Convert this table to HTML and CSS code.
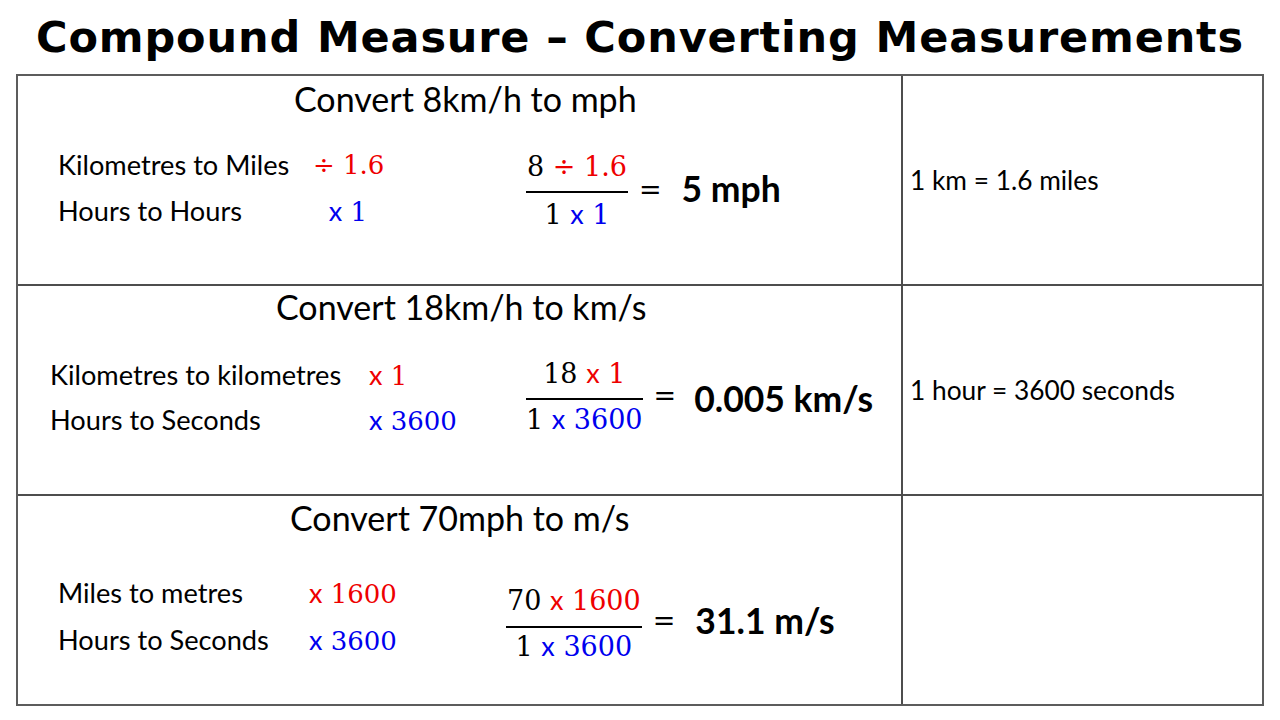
FILE: index.html
```html
<!DOCTYPE html>
<html lang="en">
<head>
<meta charset="utf-8">
<title>Compound Measure – Converting Measurements</title>
<link rel="stylesheet" href="styles.css">
</head>
<body>
<h1 class="title">Compound Measure – Converting Measurements</h1>
<div class="table">
  <div class="cell work-cell row-a">
    <div class="heading">Convert 8km/h to mph</div>
    <div class="work">
      <div class="steps">
        <span class="label">Kilometres to Miles</span><span class="val red">÷ 1.6</span>
        <span class="label">Hours to Hours</span><span class="val blue"><span class="x">x</span> 1</span>
      </div>
      <div class="calc">
        <div class="frac">
          <div class="num">8 <span class="red">÷ 1.6</span></div>
          <div class="den">1 <span class="blue"><span class="x">x</span> 1</span></div>
        </div>
        <span class="eq">=</span>
        <span class="result">5 mph</span>
      </div>
    </div>
  </div>
  <div class="cell note-cell"><span class="note">1 km = 1.6 miles</span></div>

  <div class="cell work-cell row-b">
    <div class="heading">Convert 18km/h to km/s</div>
    <div class="work">
      <div class="steps">
        <span class="label">Kilometres to kilometres</span><span class="val red"><span class="x">x</span> 1</span>
        <span class="label">Hours to Seconds</span><span class="val blue"><span class="x">x</span> 3600</span>
      </div>
      <div class="calc">
        <div class="frac">
          <div class="num">18 <span class="red"><span class="x">x</span> 1</span></div>
          <div class="den">1 <span class="blue"><span class="x">x</span> 3600</span></div>
        </div>
        <span class="eq">=</span>
        <span class="result">0.005 km/s</span>
      </div>
    </div>
  </div>
  <div class="cell note-cell"><span class="note">1 hour = 3600 seconds</span></div>

  <div class="cell work-cell row-c">
    <div class="heading">Convert 70mph to m/s</div>
    <div class="work">
      <div class="steps">
        <span class="label">Miles to metres</span><span class="val red"><span class="x">x</span> 1600</span>
        <span class="label">Hours to Seconds</span><span class="val blue"><span class="x">x</span> 3600</span>
      </div>
      <div class="calc">
        <div class="frac">
          <div class="num">70 <span class="red"><span class="x">x</span> 1600</span></div>
          <div class="den">1 <span class="blue"><span class="x">x</span> 3600</span></div>
        </div>
        <span class="eq">=</span>
        <span class="result">31.1 m/s</span>
      </div>
    </div>
  </div>
  <div class="cell note-cell"></div>
</div>
</body>
</html>
```

FILE: styles.css
```css
* { box-sizing: border-box; margin: 0; padding: 0; }

body {
  width: 1280px;
  height: 720px;
  overflow: hidden;
  background: #fff;
  color: #000;
  font-family: Lato, "Open Sans", sans-serif;
}

.title {
  height: 74px;
  font-family: "DejaVu Sans", sans-serif;
  font-weight: bold;
  font-size: 43px;
  letter-spacing: 0.85px;
  line-height: 74px;
  text-align: center;
  white-space: nowrap;
}

.table {
  margin-left: 16px;
  width: 1248px;
  height: 632px;
  display: grid;
  grid-template-columns: 883px 1fr;
  grid-template-rows: repeat(3, 208px);
  gap: 2px;
  background: #4d4d4d;
  border: 2px solid #5c5c5c;
}

.cell { background: #fff; }

.work-cell {
  display: flex;
  flex-direction: column;
}

.heading {
  font-size: 34px;
  line-height: 40px;
  white-space: nowrap;
  padding-left: var(--hx);
  padding-top: var(--hy);
}

.work {
  display: flex;
  align-items: flex-start;
  margin-top: var(--wy);
  padding-left: var(--sx);
}

.steps {
  display: grid;
  grid-template-columns: var(--labw) var(--valw);
  line-height: var(--step-lh);
}

.label {
  font-size: 27.2px;
  white-space: nowrap;
}

.val {
  font-family: "DejaVu Serif", serif;
  font-size: 26px;
  white-space: nowrap;
  text-align: var(--valalign);
}

.x {
  font-family: Lato, sans-serif;
  font-size: 27px;
}

.red { color: #ee0000; }
.blue { color: #0000ee; }

.calc {
  display: flex;
  align-items: flex-start;
  margin-left: var(--cx);
  margin-top: var(--cy);
}

.frac {
  display: flex;
  flex-direction: column;
  align-items: center;
  font-family: "DejaVu Serif", serif;
  font-size: 27px;
  white-space: nowrap;
}

.num {
  line-height: 40px;
  padding: 0 1px var(--numpb);
}

.den {
  align-self: stretch;
  text-align: center;
  border-top: 2px solid #000;
  line-height: var(--denlh);
}

.eq {
  font-family: "DejaVu Serif", serif;
  font-size: 27px;
  line-height: 40px;
  margin-left: var(--eqx);
  margin-top: var(--eqy);
}

.result {
  font-weight: bold;
  font-size: 35.5px;
  line-height: 40px;
  white-space: nowrap;
  margin-left: var(--rx);
  margin-top: var(--ry);
}

.note-cell {
  display: flex;
  align-items: center;
  padding-left: 7px;
  font-size: 26.3px;
  line-height: 40px;
  white-space: nowrap;
}

.row-a {
  --hx: 276px; --hy: 3px;
  --wy: 23px; --sx: 40px;
  --labw: 255px; --valw: 70px; --valalign: center; --step-lh: 46px;
  --cx: 143px; --cy: 5px;
  --numpb: 4px; --denlh: 42px;
  --eqx: 11px; --eqy: 23px;
  --rx: 20px; --ry: 22px;
}

.row-b {
  --hx: 258px; --hy: 1px;
  --wy: 26px; --sx: 32px;
  --labw: 319px; --valw: 85px; --valalign: left; --step-lh: 44px;
  --cx: 72px; --cy: 0px;
  --numpb: 4px; --denlh: 38px;
  --eqx: 11px; --eqy: 23px;
  --rx: 18px; --ry: 26px;
}

.row-c {
  --hx: 272px; --hy: 2px;
  --wy: 32px; --sx: 40px;
  --labw: 251px; --valw: 88px; --valalign: left; --step-lh: 45px;
  --cx: 109px; --cy: 10px;
  --numpb: 5px; --denlh: 36px;
  --eqx: 11px; --eqy: 21px;
  --rx: 20px; --ry: 21px;
}
```
